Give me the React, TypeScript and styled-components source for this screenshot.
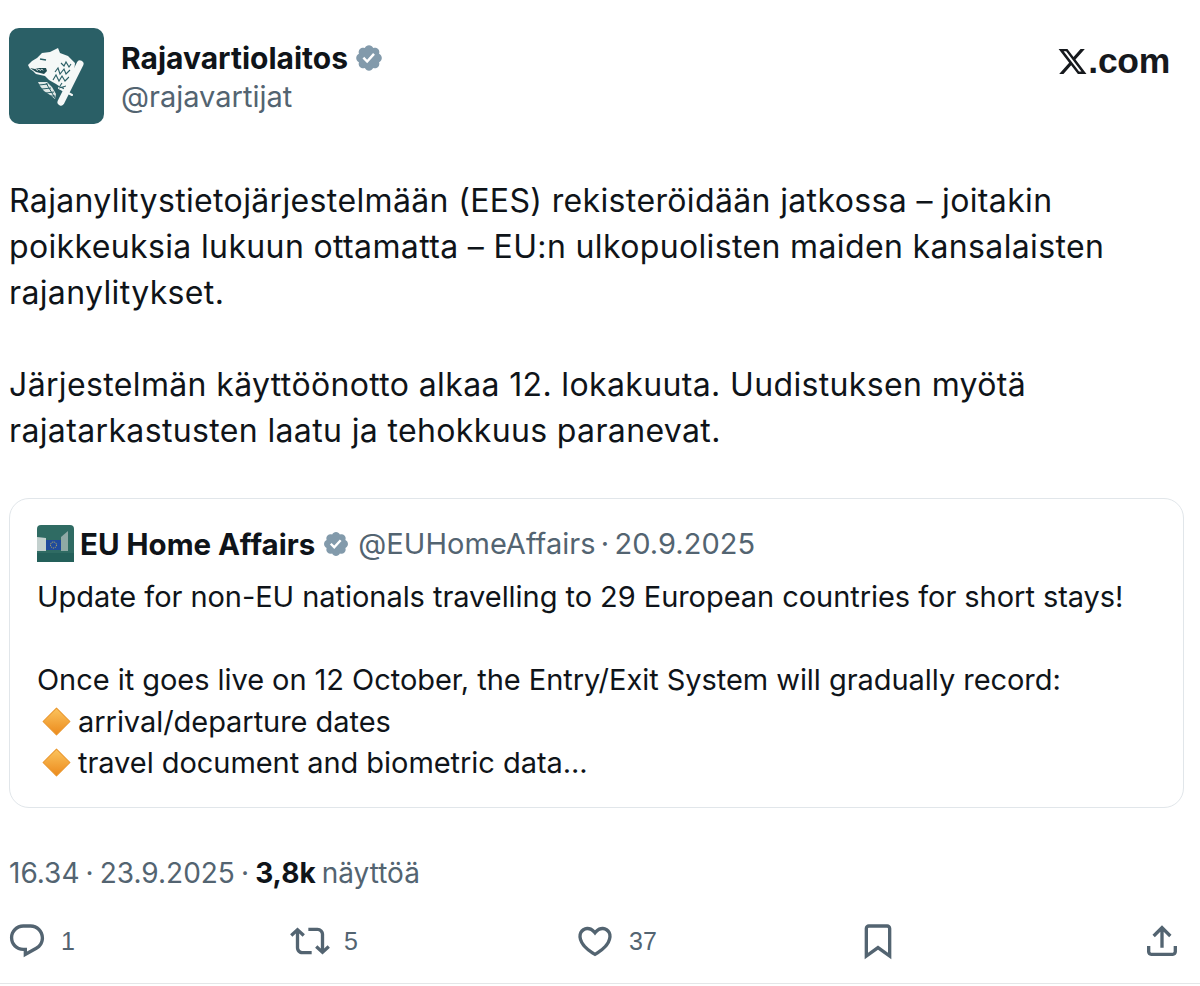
import React from "react";
import styled, { createGlobalStyle } from "styled-components";

const Global = createGlobalStyle`
  html, body { margin: 0; padding: 0; background: #fff; }
  body { font-family: Inter, "Liberation Sans", sans-serif; color: #0f1419; }
`;

const Page = styled.div`
  width: 1200px; height: 986px; box-sizing: border-box; overflow: hidden;
  display: flex; flex-direction: column; padding: 28px 16px 0 9px;
`;
const Header = styled.header`
  display: flex; align-items: flex-start; justify-content: space-between; height: 96px;
`;
const Author = styled.div`display: flex; gap: 17px;`;
const Avatar = styled.svg`width: 95px; height: 96px; display: block; flex: none;`;
const Names = styled.div`display: flex; flex-direction: column; padding-top: 10px;`;
const NameRow = styled.div`display: flex; align-items: center; gap: 6px; height: 40px;`;
const DisplayName = styled.span`font-size: 30px; font-weight: 700;`;
const Handle = styled.span`font-size: 29px; color: #536471; line-height: 38px;`;
const Brand = styled.div`
  display: flex; align-items: center; gap: 0; font-size: 35.5px; font-weight: 700; letter-spacing: -0.3px;
  margin-top: 14px; margin-right: 14px; height: 38px; font-family: "Liberation Sans", Inter, sans-serif; color: #16191d;
`;
const Body = styled.p`
  margin: 54px 0 0; font-size: 32px; line-height: 46px; letter-spacing: 0.36px; white-space: pre-line;
`;
const Quote = styled.section`
  margin-top: 44px; height: 310px; width: 1175px; box-sizing: border-box; border: 1px solid #e1e6ea; border-radius: 20px;
  padding: 26px 27px; display: flex; flex-direction: column;
`;
const QuoteHead = styled.div`display: flex; align-items: center; height: 40px; white-space: nowrap;`;
const QuoteAvatar = styled.svg`width: 37px; height: 37px; flex: none; margin-right: 6px;`;
const QuoteName = styled.span`font-size: 29.5px; font-weight: 700;`;
const QuoteMeta = styled.span`font-size: 29px; color: #536471; margin-left: 8px; word-spacing: -3px; letter-spacing: 0.05px;`;
const QuoteText = styled.div`font-size: 29px; line-height: 41.5px; letter-spacing: -0.05px; margin-top: 14px;`;
const Line = styled.div`display: flex; align-items: center; white-space: pre;`;
const Spacer = styled.div`height: 41.5px;`;
const Diamond = styled.svg`width: 29px; height: 29px; margin: 0 7px 0 5px; flex: none;`;
const Meta = styled.div`
  margin-top: 47px; font-size: 28px; color: #536471; line-height: 36px; letter-spacing: 0; word-spacing: -1.8px;
  b { color: #0f1419; font-weight: 700; }
`;
const Actions = styled.div`
  margin-top: 30px; margin-left: -2px; height: 40px; display: flex; align-items: center;
`;
const Action = styled.div<{ $w: number }>`
  width: ${(p) => p.$w}px; display: flex; align-items: center; gap: 14px; flex: none;
  font-size: 25px; color: #536471; font-family: "Liberation Sans", sans-serif;
`;
const Icon = styled.svg`
  width: 40px; height: 40px; fill: #536471; flex: none;
`;
const Badge = styled.svg<{ $size: number; $left?: number }>`
  width: ${(p) => p.$size}px; height: ${(p) => p.$size}px; fill: #829aab; flex: none; margin-left: ${(p) => p.$left ?? 0}px;
`;
const Rule = styled.div`
  position: absolute; left: 0; right: 0; top: 983px; height: 1px; background: #e4e6e8;
`;

const VERIFIED = "M22.25 12c0-1.43-.88-2.67-2.19-3.34.46-1.39.2-2.9-.81-3.91s-2.52-1.27-3.91-.81c-.66-1.31-1.91-2.19-3.34-2.19s-2.67.88-3.33 2.19c-1.4-.46-2.91-.2-3.92.81s-1.26 2.52-.8 3.91c-1.31.67-2.2 1.91-2.2 3.34s.89 2.67 2.2 3.34c-.46 1.39-.21 2.9.8 3.91s2.52 1.26 3.91.81c.67 1.31 1.91 2.19 3.34 2.19s2.68-.88 3.34-2.19c1.39.45 2.9.2 3.91-.81s1.27-2.52.81-3.91c1.31-.67 2.19-1.91 2.19-3.34zm-11.71 4.2L6.8 12.46l1.41-1.42 2.26 2.26 4.8-5.23 1.47 1.36-6.2 6.77z";

const DiamondIcon = () => (
  <Diamond viewBox="0 0 28 28">
    <defs>
      <linearGradient id="dg" x1="0" y1="0" x2="0" y2="1">
        <stop offset="0" stopColor="#fbc45e" />
        <stop offset="1" stopColor="#ec8a1c" />
      </linearGradient>
    </defs>
    <path d="M14 1 27 14 14 27 1 14Z" fill="url(#dg)" stroke="#e9962c" strokeWidth="1" strokeLinejoin="round" />
  </Diamond>
);

export default function App() {
  return (
    <Page>
      <Global />
      <Header>
        <Author>
          <Avatar viewBox="0 0 95 96">
            <rect width="95" height="96" rx="10" fill="#2a5f66" />
            <path d="M19 37 L23 33 L28 30 L33 25 L41 24 L49 20 L51 25 L59 28 L66 35 L65 44 L62 52 L56 60 L50 58 L47 56 L40 52 L36 48 L27 46 L24 43 L21 41 Z" fill="#f5f8f7" />
            <path d="M21 40 L26 41 L30 40 L37 40 L38 43 L35 46 L27 44 Z" fill="#1f4b51" />
            <path d="M27 41 L28 42.5 L30 41 L31 42.5 L33 41 L34 42.5" stroke="#f5f8f7" strokeWidth="0.8" fill="none" />
            <path d="M31 31 L37 32" stroke="#2a5f66" strokeWidth="1.3" fill="none" />
            <path d="M52 35 L55 38 L57 34 L60 39 L62 36 M46 44 L49 40 L51 46 L55 41 L57 46 L61 42 M44 52 L47 47 L50 53 L53 48 L56 53 L60 49 M51 58 L53 55" stroke="#2a5f66" strokeWidth="1.1" fill="none" />
            <path d="M29 54 L38 54 L43 59 L47 66 L46 71 L41 67 L35 63 L31 58 Z" fill="#dfe8e6" />
            <path d="M30 57 L39 56 M33 61 L42 60 M37 65 L45 64 M41 68 L46 68 M37 55 L46 70" stroke="#2a5f66" strokeWidth="1" fill="none" />
            <path d="M71 36 L52 74" stroke="#f5f8f7" strokeWidth="7" strokeLinecap="round" />
            <path d="M50 60 L63 67" stroke="#f5f8f7" strokeWidth="2" strokeLinecap="round" />
            <path d="M57 58 L50 60" stroke="#2a5f66" strokeWidth="1" />
          </Avatar>
          <Names>
            <NameRow>
              <DisplayName>Rajavartiolaitos</DisplayName>
              <Badge $size={30} viewBox="0 0 24 24"><path d={VERIFIED} /></Badge>
            </NameRow>
            <Handle>@rajavartijat</Handle>
          </Names>
        </Author>
        <Brand>
          <svg width="31" height="31" viewBox="0 0 24 24" fill="#16191d"><path d="M18.244 2.25h3.308l-7.227 8.26 8.502 11.24H16.17l-5.214-6.817L4.99 21.75H1.68l7.73-8.835L1.254 2.25H8.08l4.713 6.231zm-1.161 17.52h1.833L7.084 4.126H5.117z" /></svg>
          .com
        </Brand>
      </Header>
      <Body>{"Rajanylitystietojärjestelmään (EES) rekisteröidään jatkossa – joitakin\npoikkeuksia lukuun ottamatta – EU:n ulkopuolisten maiden kansalaisten\nrajanylitykset.\n\nJärjestelmän käyttöönotto alkaa 12. lokakuuta. Uudistuksen myötä\nrajatarkastusten laatu ja tehokkuus paranevat."}</Body>
      <Quote>
        <QuoteHead>
          <QuoteAvatar viewBox="0 0 37 37">
            <rect width="37" height="37" rx="4" fill="#2f6b63" />
            <path d="M0 12 L9 13 L9 26 L0 26Z" fill="#c3d0ce" />
            <path d="M24 12 L31 6 L31 26 L24 26Z" fill="#8fa9a5" />
            <rect x="9" y="15" width="15" height="10" fill="#1f4a9c" />
            <circle cx="16.5" cy="20" r="3" fill="none" stroke="#e8c94a" strokeWidth="0.9" strokeDasharray="1 1" />
            <rect y="28" width="37" height="9" fill="#24605a" />
          </QuoteAvatar>
          <QuoteName>EU Home Affairs</QuoteName>
          <Badge $size={28} $left={7} viewBox="0 0 24 24"><path d={VERIFIED} /></Badge>
          <QuoteMeta>@EUHomeAffairs · 20.9.2025</QuoteMeta>
        </QuoteHead>
        <QuoteText>
          <Line>Update for non-EU nationals travelling to 29 European countries for short stays!</Line>
          <Spacer />
          <Line>Once it goes live on 12 October, the Entry/Exit System will gradually record:</Line>
          <Line><DiamondIcon />arrival/departure dates</Line>
          <Line><DiamondIcon />travel document and biometric data...</Line>
        </QuoteText>
      </Quote>
      <Meta>16.34 · 23.9.2025 · <b>3,8k</b> näyttöä</Meta>
      <Actions>
        <Action $w={283}>
          <Icon viewBox="0 0 24 24"><path d="M1.751 10c0-4.42 3.584-8 8.005-8h4.366c4.49 0 8.129 3.64 8.129 8.13 0 2.96-1.607 5.68-4.196 7.11l-8.054 4.46v-3.69h-.067c-4.49.1-8.183-3.51-8.183-8.01zm8.005-6c-3.317 0-6.005 2.69-6.005 6 0 3.37 2.77 6.08 6.138 6.01l.351-.01h1.761v2.3l5.087-2.81c1.951-1.08 3.163-3.13 3.163-5.36 0-3.39-2.744-6.13-6.129-6.13H9.756z" /></Icon>1
        </Action>
        <Action $w={285}>
          <Icon viewBox="0 0 24 24"><path d="M4.5 3.88l4.432 4.14-1.364 1.46L5.5 7.55V16c0 1.1.896 2 2 2H13v2H7.5c-2.209 0-4-1.79-4-4V7.55L1.432 9.48.068 8.02 4.5 3.88zM16.5 6H11V4h5.5c2.209 0 4 1.79 4 4v8.45l2.068-1.93 1.364 1.46-4.432 4.14-4.432-4.14 1.364-1.46 2.068 1.93V8c0-1.1-.896-2-2-2z" /></Icon>5
        </Action>
        <Action $w={283}>
          <Icon viewBox="0 0 24 24"><path d="M16.697 5.5c-1.222-.06-2.679.51-3.89 2.16l-.805 1.09-.806-1.09C9.984 6.01 8.526 5.44 7.304 5.5c-1.243.07-2.349.78-2.91 1.91-.552 1.12-.633 2.78.479 4.82 1.074 1.97 3.257 4.27 7.129 6.61 3.87-2.34 6.052-4.64 7.126-6.61 1.111-2.04 1.03-3.7.477-4.82-.561-1.13-1.666-1.84-2.908-1.91zm4.187 7.69c-1.351 2.48-4.001 5.12-8.379 7.67l-.503.3-.504-.3c-4.379-2.55-7.029-5.19-8.382-7.67-1.36-2.5-1.41-4.86-.514-6.67.887-1.79 2.647-2.91 4.601-3.01 1.651-.09 3.368.56 4.798 2.01 1.429-1.45 3.146-2.1 4.796-2.01 1.954.1 3.714 1.22 4.601 3.01.896 1.81.846 4.17-.514 6.67z" /></Icon>37
        </Action>
        <Action $w={284}>
          <Icon viewBox="0 0 24 24"><path d="M4 4.5C4 3.12 5.119 2 6.5 2h11C18.881 2 20 3.12 20 4.5v18.44l-8-5.71-8 5.71V4.5zM6.5 4c-.276 0-.5.22-.5.5v14.56l6-4.29 6 4.29V4.5c0-.28-.224-.5-.5-.5h-11z" /></Icon>
        </Action>
        <Action $w={40}>
          <Icon viewBox="0 0 24 24"><path d="M12 2.59l5.7 5.7-1.41 1.42L13 6.41V16h-2V6.41l-3.3 3.3-1.41-1.42L12 2.59zM21 15l-.02 3.51c0 1.38-1.12 2.49-2.5 2.49H5.5C4.11 21 3 19.88 3 18.5V15h2v3.5c0 .28.22.5.5.5h12.98c.28 0 .5-.22.5-.5L19 15h2z" /></Icon>
        </Action>
      </Actions>
      <Rule />
    </Page>
  );
}
